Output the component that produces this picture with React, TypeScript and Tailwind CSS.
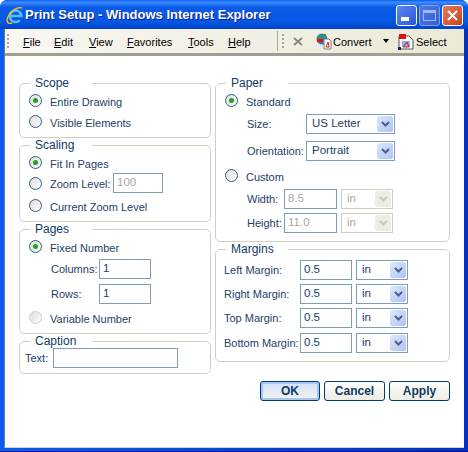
import type { ReactNode } from "react";

const font = "font-['Liberation_Sans',Arial,sans-serif]";

function Group({ title, className, children }: { title: string; className: string; children: ReactNode }) {
  return (
    <fieldset className={`rounded-[5px] border border-[#d0d0bf] ${className}`}>
      <legend className="ml-[10px] w-[62px] pl-[5px] text-[12px] leading-[12px] text-[#0f3a66]">{title}</legend>
      {children}
    </fieldset>
  );
}

function Radio({ checked, disabled }: { checked?: boolean; disabled?: boolean }) {
  return (
    <span
      className={`flex h-[13px] w-[13px] shrink-0 items-center justify-center rounded-full border bg-gradient-to-br from-[#dcdcd7] to-white ${
        disabled ? "border-[#d0d0bf]" : "border-[#2f5a85]"
      }`}
    >
      {checked && <span className="h-[5px] w-[5px] rounded-full bg-[#21a121]" />}
    </span>
  );
}

function RadioRow({ label, checked, disabled, className }: { label: string; checked?: boolean; disabled?: boolean; className: string }) {
  return (
    <div className={`flex h-[13px] items-center ${className}`}>
      <Radio checked={checked} disabled={disabled} />
      <span className="ml-[8px] mt-[3px] whitespace-nowrap text-[11px] leading-[13px] text-[#24406a]">{label}</span>
    </div>
  );
}

function TextBox({ value, width, disabled }: { value?: string; width: string; disabled?: boolean }) {
  return (
    <div
      className={`flex h-[20px] items-center border border-[#7f9db9] bg-white pl-[3px] text-[11.5px] ${width} ${
        disabled ? "text-[#aca899]" : "text-[#24406a]"
      }`}
    >
      {value}
    </div>
  );
}

function Select({ value, width, disabled }: { value: string; width: string; disabled?: boolean }) {
  return (
    <div
      className={`flex h-[20px] items-center justify-between border p-px text-[11.5px] ${width} ${
        disabled ? "border-[#d0d0bf] text-[#aca899]" : "border-[#7f9db9] text-[#24406a]"
      }`}
    >
      <span className="pl-[4px]">{value}</span>
      <span
        className={`flex h-[16px] w-[16px] items-center justify-center rounded-[2px] ${
          disabled ? "bg-[#eeede5]" : "bg-gradient-to-br from-[#dde7fd] to-[#aec3f5]"
        }`}
      >
        <svg width="9" height="6" viewBox="0 0 9 6" fill="none" stroke={disabled ? "#c9c7ba" : "#4d6185"} strokeWidth="2">
          <path d="M1 1l3.5 3.5L8 1" />
        </svg>
      </span>
    </div>
  );
}

function Row({ label, labelWidth, children, className }: { label: string; labelWidth: string; children: ReactNode; className: string }) {
  return (
    <div className={`flex items-center ${className}`}>
      <span className={`shrink-0 whitespace-nowrap text-[11px] text-[#24406a] ${labelWidth}`}>{label}</span>
      {children}
    </div>
  );
}

function Menu({ letter, rest, width }: { letter: string; rest: string; width: string }) {
  return (
    <span className={`mt-[2px] shrink-0 text-[11px] text-black ${width}`}>
      <span className="underline">{letter}</span>
      {rest}
    </span>
  );
}

function Grip() {
  return (
    <span className="flex h-[15px] w-[2px] shrink-0 flex-col justify-between">
      {[0, 1, 2, 3].map((i) => (
        <span key={i} className="h-[2px] w-[2px] bg-[#a8a698]" />
      ))}
    </span>
  );
}

function IeLogo() {
  return (
    <svg width="19" height="19" viewBox="0 0 18 18" fill="none">
      <path d="M4.500 9.500H15.500A5.500 5.500 0 1 0 14 13.500" stroke="#58bdf5" strokeWidth="2.400" />
      <path d="M16.500 2C12 0 5 5 2.500 11C1 15 3 17.500 7 16" stroke="#f5b928" strokeWidth="1.300" />
    </svg>
  );
}

function WinButton({ className, children }: { className: string; children: ReactNode }) {
  return (
    <span className={`flex h-[21px] w-[21px] rounded-[3px] border ${className}`}>
      {children}
    </span>
  );
}

export default function App() {
  return (
    <div className={`flex h-[452px] w-[468px] flex-col overflow-hidden rounded-t-[7px] border-b border-[#00138c] bg-gradient-to-r from-[#0a5df0] to-[#0331c0] ${font}`}>
      <div className="flex h-[29px] shrink-0 items-center bg-[linear-gradient(#0a5ef0,#3a8cff_8%,#0a5be8_25%,#0558e4_75%,#0242c8)] pl-[5px] pr-[5px] pt-px">
        <IeLogo />
        <span className="ml-px flex-1 text-[13px] font-bold text-white [text-shadow:1px_1px_#0f1f8c]">
          Print Setup - Windows Internet Explorer
        </span>
        <div className="flex gap-[2px]">
          <WinButton className="items-end border-white bg-gradient-to-br from-[#5c88f0] to-[#2a55d8] pb-[4px] pl-[4px]">
            <span className="h-[4px] w-[8px] bg-white" />
          </WinButton>
          <WinButton className="items-center justify-center border-[#7d9ee8] bg-gradient-to-br from-[#5078e4] to-[#3560d8]">
            <span className="h-[11px] w-[13px] border border-t-[3px] border-[#9fb8f0]" />
          </WinButton>
          <WinButton className="items-center justify-center border-white bg-gradient-to-br from-[#e8795a] to-[#c8401c]">
            <svg width="11" height="11" viewBox="0 0 11 11" stroke="#fff" strokeWidth="2">
              <path d="M1 1l9 9M10 1l-9 9" />
            </svg>
          </WinButton>
        </div>
      </div>
      <div className="mx-[4px] mb-[3px] flex min-h-0 flex-1 flex-col border-b border-l border-b-[#d0d0d0] border-l-[#6d7a8c] bg-white">
        <div className="flex h-[27px] shrink-0 items-center border-b-[3px] border-[#a09e8f] bg-gradient-to-r from-[#f8f7f2] to-[#ece9d8] pl-[2px]">
          <Grip />
          <span className="ml-[14px] flex items-center">
            <Menu letter="F" rest="ile" width="w-[31px]" />
            <Menu letter="E" rest="dit" width="w-[35px]" />
            <Menu letter="V" rest="iew" width="w-[38px]" />
            <Menu letter="F" rest="avorites" width="w-[61px]" />
            <Menu letter="T" rest="ools" width="w-[40px]" />
            <Menu letter="H" rest="elp" width="w-[49px]" />
          </span>
          <span className="h-[20px] w-px shrink-0 bg-[#aca899]" />
          <span className="ml-[4px]"><Grip /></span>
          <svg className="ml-[9px] shrink-0" width="10" height="9" viewBox="0 0 10 9" stroke="#8a8a80" strokeWidth="2">
            <path d="M1 1l8 7M9 1L1 8" />
          </svg>
          <svg className="ml-[12px] shrink-0" width="17" height="17" viewBox="0 0 17 17">
            <circle cx="7" cy="6" r="5.500" fill="#2f7fc0" />
            <path d="M3 3h4v4H3zM8 1h3v3H8z" fill="#3d9a3d" />
            <path d="M9 6h5l2 2v8H9z" fill="#fff" stroke="#7a7a7a" />
            <path d="M2 6h6v3H2z" fill="#e01010" />
            <path d="M11 14l2-5 1 5z" fill="none" stroke="#d02020" />
          </svg>
          <span className="ml-[1px] mt-[2px] w-[38px] shrink-0 text-[11px] text-black">Convert</span>
          <span className="ml-[12px] shrink-0 border-x-[3px] border-t-[4px] border-x-transparent border-t-black" />
          <svg className="ml-[9px] shrink-0" width="16" height="17" viewBox="0 0 16 17">
            <path d="M1 3h10l4 4v9H1z" fill="#fff" stroke="#555" />
            <path d="M1 1h7v5H1z" fill="#e01010" />
            <path d="M4 8h8v6H4z" fill="#8fb0e8" />
            <path d="M5 14l4-5 2 5z" fill="none" stroke="#d02020" />
            <path d="M0 14h3v3H0z" fill="#10306a" />
          </svg>
          <span className="ml-[2px] mt-[2px] text-[11px] text-black">Select</span>
        </div>
        <div className="grid grid-cols-[192px_235px] gap-x-[4px] pl-[14px] pt-[21px]">
          <div className="flex flex-col gap-px">
            <Group title="Scope" className="h-[61px]">
              <RadioRow label="Entire Drawing" checked className="ml-[9px] mt-[5px]" />
              <RadioRow label="Visible Elements" className="ml-[9px] mt-[8px]" />
            </Group>
            <Group title="Scaling" className="h-[83px]">
              <RadioRow label="Fit In Pages" checked className="ml-[9px] mt-[5px]" />
              <div className="ml-[9px] mt-[4px] flex items-center">
                <Radio />
                <span className="ml-[8px] mt-[3px] w-[63px] whitespace-nowrap text-[11px] text-[#24406a]">Zoom Level:</span>
                <TextBox value="100" width="w-[50px]" disabled />
              </div>
              <RadioRow label="Current Zoom Level" className="ml-[9px] mt-[6px]" />
            </Group>
            <Group title="Pages" className="h-[111px]">
              <RadioRow label="Fixed Number" checked className="ml-[9px] mt-[5px]" />
              <Row label="Columns:" labelWidth="w-[48px]" className="ml-[31px] mt-[6px]">
                <TextBox value="1" width="w-[52px]" />
              </Row>
              <Row label="Rows:" labelWidth="w-[48px]" className="ml-[31px] mt-[5px]">
                <TextBox value="1" width="w-[52px]" />
              </Row>
              <RadioRow label="Variable Number" disabled className="ml-[9px] mt-[7px]" />
            </Group>
            <Group title="Caption" className="h-[39px]">
              <Row label="Text:" labelWidth="w-[28px]" className="ml-[5px] mt-px">
                <TextBox width="w-[125px]" />
              </Row>
            </Group>
          </div>
          <div className="flex flex-col gap-px">
            <Group title="Paper" className="h-[165px]">
              <RadioRow label="Standard" checked className="ml-[9px] mt-[5px]" />
              <Row label="Size:" labelWidth="w-[59px]" className="ml-[31px] mt-[7px]">
                <Select value="US Letter" width="w-[89px]" />
              </Row>
              <Row label="Orientation:" labelWidth="w-[59px]" className="ml-[31px] mt-[7px]">
                <Select value="Portrait" width="w-[89px]" />
              </Row>
              <RadioRow label="Custom" className="ml-[9px] mt-[8px]" />
              <Row label="Width:" labelWidth="w-[37px]" className="ml-[31px] mt-[7px]">
                <TextBox value="8.5" width="w-[53px]" disabled />
                <span className="ml-[4px]"><Select value="in" width="w-[52px]" disabled /></span>
              </Row>
              <Row label="Height:" labelWidth="w-[37px]" className="ml-[31px] mt-[4px]">
                <TextBox value="11.0" width="w-[53px]" disabled />
                <span className="ml-[4px]"><Select value="in" width="w-[52px]" disabled /></span>
              </Row>
            </Group>
            <Group title="Margins" className="h-[119px]">
              {["Left Margin:", "Right Margin:", "Top Margin:", "Bottom Margin:"].map((label, i) => (
                <Row key={label} label={label} labelWidth="w-[76px]" className={`ml-[8px] ${i === 0 || i === 3 ? "mt-[5px]" : "mt-[4px]"}`}>
                  <TextBox value="0.5" width="w-[52px]" />
                  <span className="ml-[4px]"><Select value="in" width="w-[52px]" /></span>
                </Row>
              ))}
            </Group>
            <div className="mt-[18px] flex justify-end gap-[4px]">
              <button className="h-[20px] w-[60px] rounded-[3px] border border-[#003c74] bg-gradient-to-b from-[#cfe0fb] to-[#f4f4ee] text-[12px] font-bold text-[#0f3a66] shadow-[inset_0_0_0_2px_#a9c4f0]">OK</button>
              <button className="h-[20px] w-[61px] rounded-[3px] border border-[#003c74] bg-gradient-to-b from-white to-[#ecebe3] text-[12px] font-bold text-[#0f3a66]">Cancel</button>
              <button className="h-[20px] w-[61px] rounded-[3px] border border-[#003c74] bg-gradient-to-b from-white to-[#ecebe3] text-[12px] font-bold text-[#0f3a66]">Apply</button>
            </div>
          </div>
        </div>
      </div>
    </div>
  );
}
